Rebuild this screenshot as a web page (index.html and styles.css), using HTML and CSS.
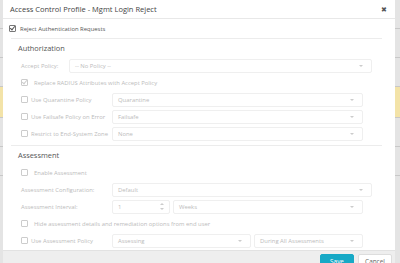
FILE: index.html
```html
<!DOCTYPE html>
<html lang="en">
<head>
  <meta charset="UTF-8" />
  <title>Access Control Profile</title>
  <link rel="stylesheet" href="styles.css">
</head>
<body>
  <div class="page">
    <div class="page-row"></div>
    <div class="page-row"></div>
    <div class="page-row"></div>
    <div class="page-row warn"></div>
    <div class="page-row"></div>
    <div class="page-row"></div>
  </div>

  <div class="modal">
    <div class="modal-header">
      <span class="modal-title">Access Control Profile - Mgmt Login Reject</span>
      <span class="close">&#x2716;</span>
    </div>

    <label class="check top-check"><span class="box checked"></span>Reject Authentication Requests</label>

    <div class="section">
      <h2>Authorization</h2>
      <div class="row">
        <span class="label short">Accept Policy:</span>
        <div class="select">-- No Policy --</div>
      </div>
      <label class="row check"><span class="box checked"></span>Replace RADIUS Attributes with Accept Policy</label>
      <div class="row narrow">
        <label class="check label"><span class="box"></span>Use Quarantine Policy</label>
        <div class="select">Quarantine</div>
      </div>
      <div class="row narrow">
        <label class="check label"><span class="box"></span>Use Failsafe Policy on Error</label>
        <div class="select">Failsafe</div>
      </div>
      <div class="row narrow">
        <label class="check label"><span class="box"></span>Restrict to End-System Zone</label>
        <div class="select">None</div>
      </div>
    </div>

    <div class="section last">
      <h2>Assessment</h2>
      <label class="row check"><span class="box"></span>Enable Assessment</label>
      <div class="row">
        <span class="label">Assessment Configuration:</span>
        <div class="select">Default</div>
      </div>
      <div class="row narrow">
        <span class="label">Assessment Interval:</span>
        <div class="spin"><span>1</span><span class="arrows"></span></div>
        <div class="select">Weeks</div>
      </div>
      <label class="row check"><span class="box"></span>Hide assessment details and remediation options from end user</label>
      <div class="row narrow">
        <label class="check label"><span class="box"></span>Use Assessment Policy</label>
        <div class="select half">Assessing</div>
        <div class="select">During All Assessments</div>
      </div>
    </div>

    <div class="modal-footer">
      <button class="btn primary">Save</button>
      <button class="btn">Cancel</button>
    </div>
  </div>
</body>
</html>
```

FILE: styles.css
```css
body {
  margin: 0;
  height: 263px;
  overflow: hidden;
  background: #e4e4e4;
  font-family: 'Open Sans', sans-serif;
  position: relative;
}
.page {
  display: flex;
  flex-direction: column;
}
.page-row {
  height: 28px;
  border-bottom: 1px solid #c8c8c8;
}
.page-row.warn {
  height: 30px;
  background: #f3e3a8;
}

.modal {
  position: absolute;
  top: 0;
  left: 3px;
  width: 392px;
  background: #fff;
}
.modal-header {
  height: 18px;
  display: flex;
  align-items: center;
  justify-content: space-between;
  padding: 0 8px 0 7px;
  border-bottom: 1px solid #e8e8e8;
}
.modal-title {
  font-size: 7.5px;
  color: #444;
}
.close {
  font-size: 7px;
  color: #555;
}

.check {
  display: flex;
  align-items: center;
  font-size: 5.9px;
  color: #bbb;
  white-space: nowrap;
}
.top-check {
  height: 19px;
  padding-left: 6px;
  color: #555;
}
.box {
  width: 5px;
  height: 5px;
  border: 1px solid #ccc;
  border-radius: 1px;
  margin-right: 3px;
  flex: none;
  position: relative;
}
.top-check .box {
  border-color: #777;
  margin-right: 4px;
}
.box.checked::after {
  content: '';
  position: absolute;
  left: 1px;
  top: -1px;
  width: 2px;
  height: 4px;
  border: solid #ccc;
  border-width: 0 1px 1px 0;
  transform: rotate(40deg);
}
.top-check .box.checked::after {
  border-color: #555;
}

.section {
  margin: 0 13px 0 8px;
  border-top: 1px solid #ececec;
  padding-bottom: 3px;
}
.section.last {
  padding-bottom: 1px;
}
.section h2 {
  margin: 0;
  height: 18px;
  line-height: 18px;
  padding-left: 7px;
  font-size: 7.4px;
  font-weight: normal;
  color: #555;
}
.row {
  height: 17px;
  display: flex;
  align-items: center;
  gap: 3px;
  padding: 0 10px 0 10px;
}
.row.narrow {
  padding-right: 19px;
}
.label {
  width: 88px;
  flex: none;
  font-size: 5.9px;
  color: #bbb;
  white-space: nowrap;
}
.label.short {
  width: 45px;
}
.select {
  flex: 1;
  height: 12px;
  border: 1px solid #efefef;
  border-radius: 2px;
  font-size: 5.9px;
  color: #bbb;
  display: flex;
  align-items: center;
  padding: 0 8px 0 5px;
  position: relative;
}
.select::after {
  content: '';
  position: absolute;
  right: 8px;
  top: 5px;
  border: 2px solid transparent;
  border-top: 2px solid #ccc;
}
.select.half {
  flex: none;
  width: 124px;
}
.spin {
  width: 46px;
  flex: none;
  height: 12px;
  border: 1px solid #efefef;
  border-radius: 2px;
  font-size: 5.9px;
  color: #bbb;
  display: flex;
  align-items: center;
  justify-content: space-between;
  padding: 0 5px 0 5px;
}
.arrows {
  position: relative;
  width: 4px;
  height: 7px;
}
.arrows::before,
.arrows::after {
  content: '';
  position: absolute;
  left: 0;
  border: 2px solid transparent;
}
.arrows::before {
  top: -2px;
  border-bottom-color: #ccc;
}
.arrows::after {
  bottom: -2px;
  border-top-color: #ccc;
}

.modal-footer {
  height: 30px;
  background: #eee;
  border-top: 1px solid #e2e2e2;
  display: flex;
  justify-content: flex-end;
  align-items: flex-start;
  gap: 4px;
  padding: 3px 3px 0 0;
}
.btn {
  width: 34px;
  height: 15px;
  border: 1px solid #ddd;
  border-radius: 2px;
  background: #fff;
  font-family: 'Open Sans', sans-serif;
  font-size: 6.4px;
  color: #666;
  padding: 0;
}
.btn.primary {
  background: #17a9c6;
  border-color: #17a9c6;
  color: #fff;
}
```
